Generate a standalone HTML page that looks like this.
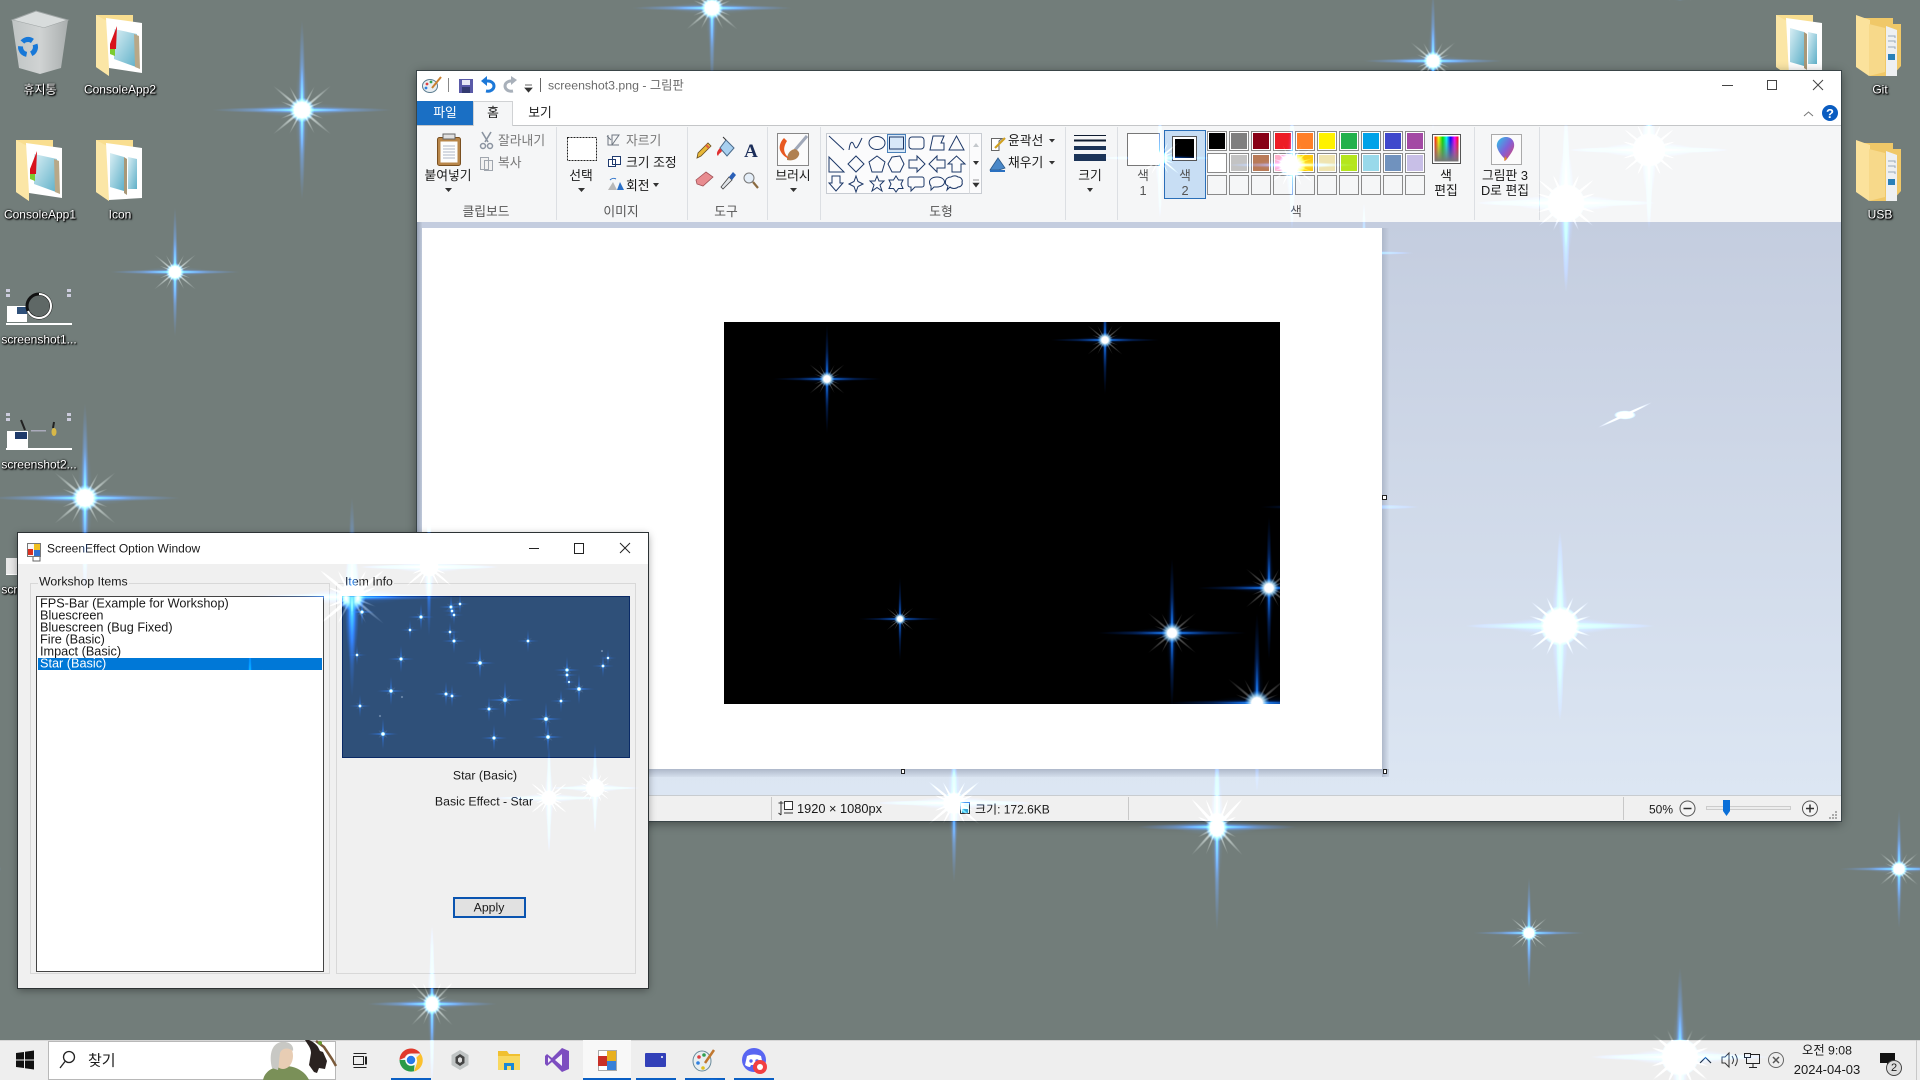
<!DOCTYPE html>
<html lang="ko"><head><meta charset="utf-8"><title>ScreenEffect</title>
<style>
html,body{margin:0;padding:0;width:1920px;height:1080px;overflow:hidden;background:#727d7a}
#r{position:relative;width:1920px;height:1080px;overflow:hidden;background:#727d7a;font-family:"Liberation Sans","Noto Sans CJK KR",sans-serif;font-size:12.8px;color:#1a1a1a;isolation:isolate}
#r div,#r svg.a{position:absolute}
.c,.l{position:absolute;white-space:nowrap;line-height:1;font-style:normal;top:0}
.c{transform:translate(-50%,-45%)}
.l{transform:translateY(-45%)}
.d{color:#fff;font-size:12px;text-shadow:1px 1px 1px #000,0 0 2px #000,1px 1px 2px #000}
.g{color:#777}
.k{color:#555}
.o{mix-blend-mode:screen;mix-blend-mode:plus-lighter}
</style></head><body><div id="r">

<svg width="0" height="0" style="position:absolute"><defs>
<linearGradient id="pad" x1="0" y1="0" x2="1" y2="1"><stop offset="0" stop-color="#d8eef4"/><stop offset="1" stop-color="#5fb0c8"/></linearGradient>
<linearGradient id="bin" x1="0" y1="0" x2="1" y2="0"><stop offset="0" stop-color="#bfc4c4"/><stop offset=".5" stop-color="#d0d3d3"/><stop offset="1" stop-color="#a9aeae"/></linearGradient>
<linearGradient id="rb" x1="0" y1="0" x2="1" y2="0"><stop offset="0" stop-color="#f00"/><stop offset=".17" stop-color="#ff0"/><stop offset=".34" stop-color="#0d0"/><stop offset=".5" stop-color="#0ff"/><stop offset=".67" stop-color="#00f"/><stop offset=".84" stop-color="#f0f"/><stop offset="1" stop-color="#f00"/></linearGradient>
<linearGradient id="gy" x1="0" y1="0" x2="0" y2="1"><stop offset="0" stop-color="#808080" stop-opacity="0"/><stop offset="1" stop-color="#777"/></linearGradient>
<linearGradient id="dr" x1="0" y1="0" x2="1" y2="1"><stop offset="0" stop-color="#28c8e8"/><stop offset=".5" stop-color="#8060d8"/><stop offset="1" stop-color="#e84060"/></linearGradient>
<radialGradient id="sa"><stop offset="0" stop-color="#80c8ff"/><stop offset=".2" stop-color="#1a80ff" stop-opacity=".85"/><stop offset=".5" stop-color="#0850c8" stop-opacity=".4"/><stop offset="1" stop-color="#0030a0" stop-opacity="0"/></radialGradient>
<radialGradient id="sd"><stop offset="0" stop-color="#fff" stop-opacity=".5"/><stop offset="1" stop-color="#fff" stop-opacity="0"/></radialGradient>
<radialGradient id="sc"><stop offset="0" stop-color="#fff"/><stop offset=".42" stop-color="#fff"/><stop offset=".65" stop-color="#9fdcff" stop-opacity=".7"/><stop offset="1" stop-color="#2a90ff" stop-opacity="0"/></radialGradient>
<g id="s">
<ellipse rx="100" ry="3.6" fill="url(#sa)"/><ellipse rx="4" ry="100" fill="url(#sa)"/>
<ellipse rx="55" ry="8" fill="url(#sa)" opacity=".3"/><ellipse rx="8" ry="55" fill="url(#sa)" opacity=".3"/>
<g fill="url(#sd)"><ellipse rx="42" ry="2" transform="rotate(40)"/><ellipse rx="42" ry="2" transform="rotate(-40)"/><ellipse rx="30" ry="1.600" transform="rotate(62)"/><ellipse rx="30" ry="1.600" transform="rotate(-62)"/><ellipse rx="26" ry="1.600" transform="rotate(22)"/><ellipse rx="26" ry="1.600" transform="rotate(-22)"/></g>
<circle r="14" fill="url(#sc)"/>
</g>
<g id="w">
<ellipse rx="100" ry="4" fill="url(#sa)"/><ellipse rx="4.5" ry="100" fill="url(#sa)"/>
<ellipse rx="60" ry="9" fill="url(#sa)" opacity=".4"/><ellipse rx="9" ry="60" fill="url(#sa)" opacity=".4"/>
<g fill="url(#sd)"><ellipse rx="40" ry="1.800" transform="rotate(40)"/><ellipse rx="40" ry="1.800" transform="rotate(-40)"/><ellipse rx="34" ry="1.800" transform="rotate(65)"/><ellipse rx="34" ry="1.800" transform="rotate(-65)"/><ellipse rx="34" ry="1.800" transform="rotate(18)"/><ellipse rx="34" ry="1.800" transform="rotate(-18)"/></g>
<circle r="21" fill="url(#sc)"/>
</g>
<pattern id="edge" patternUnits="userSpaceOnUse" x="0" y="0" width="1920" height="1080">
<use href="#s" transform="translate(712 8) scale(.8)"/>
<use href="#s" transform="translate(1433 61) scale(.7)"/>
<use href="#s" transform="translate(1899 869) scale(.6)"/>
<use href="#w" transform="translate(1680 1057) scale(.9)"/>
<use href="#s" transform="translate(432 1004) scale(.65 .8)"/>
</pattern>
<g id="fA">
<path d="M0 1H37V10H13V62L0 53Z" fill="#f9de90"/><path d="M0 1L13 8V62L0 53Z" fill="#fbe6a6"/>
<path d="M10 4L46 9V59L13 54Z" fill="#fff"/>
<path d="M18 15L41 20L40 53L18 45Z" fill="url(#pad)"/>
<path d="M14 30L21 12L20 35L14 35Z" fill="#d8121c"/><path d="M14 35H19V42L14 40Z" fill="#7ccc30"/>
<path d="M38 20L43 22L44 55L39 53Z" fill="#b8a888"/>
</g>
<g id="fB">
<path d="M0 1H37V10H13V62L0 53Z" fill="#f9de90"/><path d="M0 1L13 8V62L0 53Z" fill="#fbe6a6"/>
<path d="M10 4L46 9V59L13 61Z" fill="#fff"/>
<path d="M14 14L28 18L28 52L14 48Z" fill="url(#pad)"/><path d="M32 18L41 20L41 50L32 50Z" fill="url(#pad)"/>
<path d="M28 18L31 20V56L28 54Z" fill="#a89878"/>
</g>
<g id="fC">
<path d="M4 4H37V10H45V52L36 62H14Z" fill="#f0c868"/>
<path d="M30 12L41 16V62H30Z" fill="#eef0f2"/>
<path d="M32 40H39V46H32Z" fill="#2a80b8"/><path d="M32 22H39V24M32 27H39V29M32 33H39V35" stroke="#9ab" fill="none"/>
<path d="M0 1L14 6V12H13V62L0 53Z" fill="#fbe29c"/><path d="M13 10L29 14V58L13 62Z" fill="#f7d98a"/>
</g>
</defs></svg>

<!-- desktop icons -->
<svg class="a" style="left:0;top:0" width="1920" height="1080">
<path d="M12 20L36 11L68 20L44 28Z" fill="#d8dcdc" stroke="#9ea4a4"/>
<path d="M12 20L44 28L68 20L61 68L40 74L19 68Z" fill="url(#bin)"/>
<circle cx="28" cy="47" r="7.5" fill="none" stroke="#1778d8" stroke-width="5" stroke-dasharray="11 4.700" transform="rotate(-20 28 47)"/>
<use href="#fA" x="96" y="14"/><use href="#fA" x="16" y="139"/><use href="#fB" x="96" y="139"/>
<use href="#fB" x="1776" y="14"/><use href="#fC" x="1856" y="14"/><use href="#fC" x="1856" y="139"/>
<!-- thumbs -->
<g>
<rect x="6" y="288" width="66" height="37" fill="#727d7a"/><path d="M6 324H72" stroke="#fff" stroke-width="2"/>
<rect x="7" y="306" width="20" height="16" fill="#fff"/><rect x="17" y="307" width="10" height="7" fill="#2f5079"/>
<circle cx="39" cy="306" r="12" fill="#5f6866" stroke="#111" stroke-width="3"/><path d="M39 294a12 12 0 0 1 0 24a12 12 0 0 1-11-7" fill="none" stroke="#fff" stroke-width="2"/>
<path d="M6 289h4v3h-4zM6 294h4v3h-4zM67 289h4v3h-4zM67 294h4v3h-4z" fill="#ccd"/>
<rect x="6" y="412" width="66" height="38" fill="#727d7a"/><path d="M6 449H72" stroke="#fff" stroke-width="2"/>
<rect x="7" y="431" width="21" height="17" fill="#fff"/><rect x="15" y="432" width="12" height="7" fill="#1e3a6a"/>
<path d="M21 420l4 10M54 422l-1 6" stroke="#222" stroke-width="2"/><ellipse cx="54" cy="432" rx="2.5" ry="4" fill="#d8b848"/><rect x="31" y="430" width="15" height="1.5" fill="#aab"/>
<path d="M6 413h4v3h-4zM6 418h4v3h-4zM67 413h4v3h-4zM67 418h4v3h-4z" fill="#ccd"/>
<rect x="6" y="558" width="66" height="17" fill="#e8e8e8"/><path d="M6 574.500H72" stroke="#fff"/>
</g>
</svg>
<i class="c d" style="left:40px;top:89px">휴지통</i>
<i class="c d" style="left:120px;top:89px">ConsoleApp2</i>
<i class="c d" style="left:40px;top:214px">ConsoleApp1</i>
<i class="c d" style="left:120px;top:214px">Icon</i>
<i class="c d" style="left:39px;top:339px">screenshot1...</i>
<i class="c d" style="left:39px;top:464px">screenshot2...</i>
<i class="c d" style="left:39px;top:589px">screenshot3...</i>
<i class="c d" style="left:1880px;top:89px">Git</i>
<i class="c d" style="left:1880px;top:214px">USB</i>

<!-- PAINT WINDOW -->
<div style="left:417px;top:71px;width:1424px;height:750px;background:#fff;box-shadow:0 0 0 1px #3a4548,0 2px 10px rgba(0,0,0,.45)"></div>
<div style="left:417px;top:100px;width:1424px;height:25px;background:#fff;border-bottom:1px solid #c4c6c8"></div>
<div style="left:417px;top:101px;width:56px;height:24px;background:#1a6fc4"></div>
<div style="left:473px;top:101px;width:40px;height:25px;background:#f5f6f7;border:1px solid #d0d2d4;border-bottom:0;box-sizing:border-box"></div>
<div style="left:417px;top:126px;width:1424px;height:96px;background:#f5f6f7"></div>
<div style="left:417px;top:222px;width:1424px;height:573px;background:linear-gradient(#c4cddf,#dce6f3)"></div>
<div style="left:417px;top:222px;width:5px;height:573px;background:linear-gradient(90deg,#9aa5b8,#c0c9da)"></div>
<div style="left:422px;top:769px;width:967px;height:8px;background:linear-gradient(#aeb8ca,rgba(190,200,216,.25))"></div>
<div style="left:1382px;top:228px;width:7px;height:549px;background:linear-gradient(90deg,#aeb8ca,rgba(190,200,216,.1))"></div>
<div style="left:422px;top:228px;width:960px;height:541px;background:#fff"></div>
<div style="left:724px;top:322px;width:556px;height:382px;background:#000"></div>
<div style="left:417px;top:795px;width:1424px;height:26px;background:#f0f0f0;border-top:1px solid #c8ccd0;box-sizing:border-box"></div>

<svg class="a" style="left:0;top:0" width="1920" height="1080">
<!-- handles -->
<g fill="#fff" stroke="#222"><rect x="1382.5" y="495.5" width="4" height="4"/><rect x="901.5" y="769.5" width="3" height="4"/><rect x="1383.5" y="769.5" width="3" height="4"/></g>
<!-- separators -->
<g stroke="#dcdfe3"><path d="M556.5 127V220M687.5 127V220M767.5 127V220M820.5 127V220M1065.5 127V220M1117.5 127V220M1474.5 127V220M1539.5 127V220"/></g>
<g stroke="#c8c8c8"><path d="M771.5 797V820M1128.5 797V820M1623.5 797V820"/></g>
<!-- title bar icons -->
<g>
<g transform="translate(5 0)"><ellipse cx="425" cy="86" rx="7.5" ry="6.5" fill="#e8eef2" stroke="#5b7c90"/><circle cx="422" cy="84" r="1.4" fill="#e04040"/><circle cx="426" cy="82" r="1.4" fill="#30a050"/><circle cx="421" cy="88" r="1.4" fill="#3080e0"/><path d="M427 88L436 77" stroke="#c88030" stroke-width="2"/></g>
<path d="M448.5 78V92" stroke="#888"/>
<rect x="459" y="79" width="14" height="14" fill="#5a5aa8"/><rect x="462" y="80" width="8" height="5" fill="#e8e8f4"/><rect x="462" y="87" width="8" height="6" fill="#333a70"/>
<path d="M486 91c5 1 8-2 8-5s-3-5-6-5h-3" fill="none" stroke="#1c78d8" stroke-width="3"/><path d="M481 81l6-5v10z" fill="#1c78d8"/>
<path d="M513 91c-5 1-8-2-8-5s3-5 6-5h0" fill="none" stroke="#a8b0ba" stroke-width="3"/><path d="M517 80l-6-4v9z" fill="#a8b0ba"/>
<path d="M525 85h7M525 88l3.500 4 3.500-4z" fill="#333" stroke="#333" stroke-width=".8"/>
<path d="M540.500 78V92" stroke="#666"/>
</g>
<!-- window controls -->
<g stroke="#444" fill="none"><path d="M1722 85.500H1733"/><rect x="1767.500" y="80.500" width="9" height="9"/><path d="M1813 80L1823 90M1823 80L1813 90"/><path d="M1804 116l4.500-4 4.500 4" stroke="#777"/></g>
<circle cx="1830" cy="113" r="8" fill="#0a5cc0"/>
<text x="1830" y="118" font-family="Liberation Sans,sans-serif" font-size="13" font-weight="700" fill="#fff" text-anchor="middle">?</text>
<!-- paste -->
<rect x="437.500" y="137.500" width="23" height="28" rx="2" fill="#b8864a" stroke="#7a5020"/><rect x="440.500" y="141.500" width="17" height="21" fill="#fdfdfd"/><path d="M443 146h12M443 149h12M443 152h12M443 155h12M443 158h12" stroke="#b0b8c8"/><rect x="443" y="134" width="12" height="5" fill="#e0e0e0" stroke="#666"/>
<path d="M445 188h7l-3.500 4z" fill="#333"/>
<!-- scissors copy -->
<path d="M482 132l6 10M491 132l-6 10" stroke="#8a93a0" stroke-width="1.600"/><circle cx="483" cy="146" r="2.500" fill="none" stroke="#8a93a0" stroke-width="1.500"/><circle cx="490" cy="146" r="2.500" fill="none" stroke="#8a93a0" stroke-width="1.500"/>
<path d="M480.500 157.500h8v12h-8zM484.500 160.500h8v10h-8z" fill="#f2f2f2" stroke="#a0a6ae"/>
<!-- select -->
<rect x="567.500" y="137.500" width="29" height="23" fill="#fff" stroke="#222" stroke-dasharray="2 1"/>
<path d="M578 188h7l-3.500 4z" fill="#333"/>
<path d="M608 135V145H619M612 145V135H619L612 145" fill="none" stroke="#6e7680"/><path d="M607 136l4 4" stroke="#6e7680"/>
<path d="M608.500 159.500h7v7h-7zM612.500 156.500h8v8h-8z" fill="#fff" stroke="#1f3a6e"/>
<path d="M608 190h9l-4-8z" fill="#b8b8b8"/><path d="M617 190h7l-4-8z" fill="#2a70c8"/><path d="M610 180a5 5 0 0 1 6-1" stroke="#2a70c8" fill="none"/>
<path d="M653 183h6l-3 4z" fill="#333"/>
<!-- tools -->
<path d="M697 158l1-5 10-10 3 3-10 10z" fill="#e8b838" stroke="#6a5020" stroke-width=".8"/><path d="M706 145l3 3" stroke="#e06040" stroke-width="2"/>
<path d="M726 140l8 8-7 8-7-8z" fill="#a8d0f0" stroke="#4a6a8a"/><path d="M720 148c-3 3-4 6-2 8 1-3 3-3 4-5z" fill="#e03030"/><path d="M726 140l-3-3" stroke="#333"/>
<text x="751" y="157" font-family="Liberation Serif,serif" font-size="19" font-weight="700" fill="#1c2e5a" text-anchor="middle">A</text>
<path d="M696 180l10-8 7 5-10 9-6-2z" fill="#e88c90" stroke="#a05055" stroke-width=".8"/>
<path d="M721 187l8-10 3 3-9 9z" fill="#e0e4e8" stroke="#444" stroke-width=".8"/><path d="M729 177l4-5 3 3-4 5z" fill="#2a60b8"/>
<circle cx="749" cy="178" r="5" fill="#e4eef8" stroke="#777"/><path d="M753 182l5 6" stroke="#8a6a40" stroke-width="2.200"/>
<!-- brush -->
<rect x="777.500" y="133.500" width="31" height="32" fill="#fbfbfb" stroke="#888"/>
<path d="M807 136L795 150" stroke="#a0a8b8" stroke-width="3"/><path d="M795 149c-6 1-8 6-8 11 5 1 10 0 12-5 1-2-1-5-4-6z" fill="#b08050"/><path d="M784 138c-4 4-5 9-4 12 2 5 6 8 10 9-6-5-8-10-3-18z" fill="#e85820"/>
<path d="M790 188h7l-3.500 4z" fill="#333"/>
<!-- shapes -->
<rect x="826.500" y="133.500" width="155" height="60" fill="#fbfbfc" stroke="#c8ccd2"/>
<path d="M969.500 133.500V193.500" stroke="#d8dadd"/>
<path d="M973 147l3-4 3 4z" fill="#c4c8cc"/><path d="M973 161h6l-3 4z" fill="#333"/><path d="M973 180h6M973 183h6l-3 4z" fill="#333" stroke="#333" stroke-width=".6"/>
<rect x="887.500" y="134.500" width="18" height="18" fill="#d8e8f8" stroke="#4a80b8"/>
<g fill="none" stroke="#1d3868" stroke-width="1">
<path d="M829 136L844 150"/>
<path d="M849 150c1-8 3-10 5-5s3 4 8-7"/>
<ellipse cx="877" cy="143" rx="8" ry="6.500"/>
<rect x="889.500" y="137" width="14" height="12"/>
<rect x="909" y="137" width="15" height="12" rx="3"/>
<path d="M930 150L933 136H944L941 143H944V150Z"/>
<path d="M949 150L956.500 136L964 150Z"/>
<path d="M829 157V172H844Z"/>
<path d="M856 156L864 164L856 172L848 164Z"/>
<path d="M877 156L885 162L882 172H872L869 162Z"/>
<path d="M892 157L900 156L904 164L900 172L892 172L888 164Z"/>
<path d="M909 160H917V156L925 164L917 172V168H909Z"/>
<path d="M945 160H937V156L929 164L937 172V168H945Z"/>
<path d="M952 172V164H948L956.500 156L965 164H961V172Z"/>
<path d="M832 176V183H829L836 191L843 183H840V176Z"/>
<path d="M856 176L858 181.500L863 184L858 186.500L856 192L854 186.500L849 184L854 181.500Z"/>
<path d="M877 176L879 181L884 181L880 185L882 191L877 187.500L872 191L874 185L870 181L875 181Z"/>
<path d="M896 176L898.500 180H903L901 184L903 188.500H898.500L896 192L893.500 188.500H889L891 184L889 180H893.500Z"/>
<path d="M910 177H922a2 2 0 0 1 2 2V185a2 2 0 0 1-2 2H915L911 191V187H910a2 2 0 0 1-2-2V179a2 2 0 0 1 2-2Z"/>
<path d="M937 177c4.500 0 7.500 2.300 7.500 5s-3 5-7.500 5l-3 0-3 3 0-4c-1-1-1.500-2.300-1.500-4 0-2.700 3-5 7.500-5Z"/>
<path d="M951 177c3-2 6-1 7 0 3 0 5 3 4 5 1 2.500-1 5-4 5-2 2-6 2-8 0l-3 3 1-4c-2-1-3-2.500-2.500-4.500 0-3 3-4.500 5.500-4.500Z"/>
</g>
<!-- outline / fill -->
<path d="M991.500 138.500H1002L999 141V150.500H991.500Z" fill="#fff" stroke="#666"/><path d="M995 148l10-10" stroke="#d0a020" stroke-width="2.200"/>
<path d="M990 170l8-12 7 10-6 2z" fill="#4a88c8" stroke="#2a5888" stroke-width=".8"/><path d="M990 171H1005" stroke="#2a70c0" stroke-width="2"/>
<path d="M1049 139h6l-3 3.500zM1049 161h6l-3 3.500z" fill="#333"/>
<!-- size -->
<path d="M1074 135.500H1106" stroke="#0f1c30"/><path d="M1074 140.500H1106" stroke="#0f1c30" stroke-width="2"/><path d="M1074 148H1106" stroke="#1c3458" stroke-width="4"/><path d="M1074 157.500H1106" stroke="#1c3458" stroke-width="7"/>
<path d="M1087 188h6l-3 4z" fill="#333"/>
<!-- color1 2 -->
<rect x="1127.500" y="133.500" width="32" height="32" fill="#fff" stroke="#777"/>
<rect x="1164.500" y="130.500" width="41" height="68" fill="#c8def4" stroke="#2a6fb8"/>
<rect x="1172.500" y="136.500" width="24" height="24" fill="#fff" stroke="#555"/><rect x="1175" y="139" width="19" height="19" fill="#000"/>
<!-- palette -->
<g stroke="#8a8a8a" fill="#fff">
<rect x="1207.500" y="131.500" width="19" height="19"/><rect x="1229.500" y="131.500" width="19" height="19"/><rect x="1251.500" y="131.500" width="19" height="19"/><rect x="1273.500" y="131.500" width="19" height="19"/><rect x="1295.500" y="131.500" width="19" height="19"/><rect x="1317.500" y="131.500" width="19" height="19"/><rect x="1339.500" y="131.500" width="19" height="19"/><rect x="1361.500" y="131.500" width="19" height="19"/><rect x="1383.500" y="131.500" width="19" height="19"/><rect x="1405.500" y="131.500" width="19" height="19"/>
<rect x="1207.500" y="153.500" width="19" height="19"/><rect x="1229.500" y="153.500" width="19" height="19"/><rect x="1251.500" y="153.500" width="19" height="19"/><rect x="1273.500" y="153.500" width="19" height="19"/><rect x="1295.500" y="153.500" width="19" height="19"/><rect x="1317.500" y="153.500" width="19" height="19"/><rect x="1339.500" y="153.500" width="19" height="19"/><rect x="1361.500" y="153.500" width="19" height="19"/><rect x="1383.500" y="153.500" width="19" height="19"/><rect x="1405.500" y="153.500" width="19" height="19"/>
</g>
<g fill="#f5f6f7" stroke="#8a8a8a">
<rect x="1207.500" y="175.500" width="19" height="19"/><rect x="1229.500" y="175.500" width="19" height="19"/><rect x="1251.500" y="175.500" width="19" height="19"/><rect x="1273.500" y="175.500" width="19" height="19"/><rect x="1295.500" y="175.500" width="19" height="19"/><rect x="1317.500" y="175.500" width="19" height="19"/><rect x="1339.500" y="175.500" width="19" height="19"/><rect x="1361.500" y="175.500" width="19" height="19"/><rect x="1383.500" y="175.500" width="19" height="19"/><rect x="1405.500" y="175.500" width="19" height="19"/>
</g>
<rect x="1209" y="133" width="16" height="16" fill="#000"/><rect x="1231" y="133" width="16" height="16" fill="#7f7f7f"/><rect x="1253" y="133" width="16" height="16" fill="#880015"/><rect x="1275" y="133" width="16" height="16" fill="#ed1c24"/><rect x="1297" y="133" width="16" height="16" fill="#ff7f27"/><rect x="1319" y="133" width="16" height="16" fill="#fff200"/><rect x="1341" y="133" width="16" height="16" fill="#22b14c"/><rect x="1363" y="133" width="16" height="16" fill="#00a2e8"/><rect x="1385" y="133" width="16" height="16" fill="#3f48cc"/><rect x="1407" y="133" width="16" height="16" fill="#a349a4"/>
<rect x="1209" y="155" width="16" height="16" fill="#fff"/><rect x="1231" y="155" width="16" height="16" fill="#c3c3c3"/><rect x="1253" y="155" width="16" height="16" fill="#b97a57"/><rect x="1275" y="155" width="16" height="16" fill="#ffaec9"/><rect x="1297" y="155" width="16" height="16" fill="#ffc90e"/><rect x="1319" y="155" width="16" height="16" fill="#efe4b0"/><rect x="1341" y="155" width="16" height="16" fill="#b5e61d"/><rect x="1363" y="155" width="16" height="16" fill="#99d9ea"/><rect x="1385" y="155" width="16" height="16" fill="#7092be"/><rect x="1407" y="155" width="16" height="16" fill="#c8bfe7"/>
<!-- edit colors -->
<rect x="1432.500" y="134.500" width="28" height="29" fill="#fff" stroke="#555"/><rect x="1434.500" y="136.500" width="24" height="25" fill="url(#rb)"/><rect x="1434.500" y="136.500" width="24" height="25" fill="url(#gy)"/>
<!-- 3d -->
<rect x="1491.500" y="134.500" width="30" height="30" fill="#fbfbfb" stroke="#aaa"/>
<path d="M1506 137c6 0 9 5 8 10-1 4-4 8-7 12l-2 2-1-3c-3-3-6-7-7-11-1-5 3-10 9-10z" fill="url(#dr)"/><path d="M1505 156l-1 5 3-2z" fill="#e09020"/>
<!-- status icons -->
<path d="M781 801V815M778.500 803h5M778.500 813l2.500 2" stroke="#333" fill="none"/><rect x="784.500" y="801.500" width="8" height="8" fill="#fff" stroke="#333"/><path d="M784 813H793" stroke="#333"/>
<rect x="960.500" y="802.500" width="9" height="11" fill="#dff" stroke="#333"/><rect x="962" y="809" width="6" height="4" fill="#38a8d8"/>
<circle cx="1687.500" cy="808.500" r="7.500" fill="#f4f4f4" stroke="#555"/><path d="M1683.500 808.500h8" stroke="#333" stroke-width="1.500"/>
<rect x="1706.500" y="806.500" width="84" height="3" fill="#ececec" stroke="#ccc"/>
<path d="M1723 800h7v11l-3.500 5-3.500-5z" fill="#0a6fd8"/>
<circle cx="1810" cy="808.500" r="7.500" fill="#f4f4f4" stroke="#555"/><path d="M1806 808.500h8M1810 804.500v8" stroke="#333" stroke-width="1.500"/>
<path d="M1835 817h2v2h-2zM1832 817h2v2h-2zM1835 814h2v2h-2zM1829 817h2v2h-2zM1832 814h2v2h-2zM1835 811h2v2h-2z" fill="#aaa"/>
</svg>
<i class="l" style="left:548px;top:85px;color:#6b6b6b;font-size:12.300px">screenshot3.png - 그림판</i>
<i class="c" style="left:445px;top:113px;color:#fff">파일</i><i class="c" style="left:493px;top:113px">홈</i><i class="c" style="left:540px;top:113px">보기</i>
<i class="c" style="left:448px;top:176px">붙여넣기</i>
<i class="l g" style="left:498px;top:141px">잘라내기</i><i class="l g" style="left:498px;top:163px">복사</i>
<i class="c" style="left:581px;top:176px">선택</i>
<i class="l g" style="left:626px;top:141px">자르기</i><i class="l" style="left:626px;top:163px">크기 조정</i><i class="l" style="left:626px;top:186px">회전</i>
<i class="c" style="left:793px;top:176px">브러시</i>
<i class="l" style="left:1008px;top:141px">윤곽선</i><i class="l" style="left:1008px;top:163px">채우기</i>
<i class="c" style="left:1090px;top:176px">크기</i>
<i class="c k" style="left:1143px;top:176px">색</i><i class="c k" style="left:1143px;top:191px">1</i>
<i class="c k" style="left:1185px;top:176px">색</i><i class="c k" style="left:1185px;top:191px">2</i>
<i class="c" style="left:1446px;top:176px">색</i><i class="c" style="left:1446px;top:191px">편집</i>
<i class="c" style="left:1505px;top:176px">그림판 3</i><i class="c" style="left:1505px;top:191px">D로 편집</i>
<i class="c k" style="left:486px;top:212px">클립보드</i><i class="c k" style="left:621px;top:212px">이미지</i><i class="c k" style="left:726px;top:212px">도구</i><i class="c k" style="left:941px;top:212px">도형</i><i class="c k" style="left:1296px;top:212px">색</i>
<i class="l" style="left:797px;top:809px;font-size:12.800px">1920 × 1080px</i>
<i class="l" style="left:975px;top:809px;font-size:12px">크기: 172.6KB</i>
<i class="l" style="left:1649px;top:809px;font-size:12px">50%</i>

<!-- OPTION WINDOW -->
<div style="left:18px;top:533px;width:630px;height:455px;background:#f0f0f0;box-shadow:0 0 0 1px #2c3234,0 2px 8px rgba(0,0,0,.4)"></div>
<div style="left:18px;top:533px;width:630px;height:31px;background:#fff"></div>
<div style="left:30px;top:583px;width:300px;height:391px;box-sizing:border-box;border:1px solid #d8d8d8"></div>
<div style="left:336px;top:583px;width:300px;height:391px;box-sizing:border-box;border:1px solid #d8d8d8"></div>
<div style="left:36px;top:596px;width:288px;height:376px;box-sizing:border-box;background:#fff;border:1px solid #444"></div>
<div style="left:38px;top:658px;width:284px;height:12px;background:#0078d7"></div>
<div style="left:342px;top:596px;width:288px;height:162px;box-sizing:border-box;background:#2f5079;border:1px solid #0a2a66"></div>
<div style="left:453px;top:897px;width:73px;height:21px;box-sizing:border-box;background:#e1e1e1;border:2px solid #0a54b0"></div>
<i class="l" style="left:38px;top:581px;background:#f0f0f0;padding:0 1px;font-size:12.300px">Workshop Items</i>
<i class="l" style="left:344px;top:581px;background:#f0f0f0;padding:0 1px;font-size:12.300px">Item Info</i>
<i class="l" style="left:47px;top:548px;font-size:12px">ScreenEffect Option Window</i>
<i class="l" style="left:40px;top:603px;font-size:12.700px">FPS-Bar (Example for Workshop)</i>
<i class="l" style="left:40px;top:615px;font-size:12.700px">Bluescreen</i>
<i class="l" style="left:40px;top:627px;font-size:12.700px">Bluescreen (Bug Fixed)</i>
<i class="l" style="left:40px;top:639px;font-size:12.700px">Fire (Basic)</i>
<i class="l" style="left:40px;top:651px;font-size:12.700px">Impact (Basic)</i>
<i class="l" style="left:40px;top:663px;font-size:12.700px;color:#fff">Star (Basic)</i>
<i class="c" style="left:485px;top:775px;font-size:12.300px">Star (Basic)</i>
<i class="c" style="left:484px;top:801px;font-size:12.300px">Basic Effect - Star</i>
<i class="c" style="left:489px;top:907px;font-size:12.300px">Apply</i>
<svg class="a" style="left:0;top:0" width="1920" height="1080">
<rect x="33" y="553" width="7" height="8" fill="#fff" stroke="#666"/><rect x="27.500" y="543.500" width="13" height="13" fill="#f8f8f8" stroke="#777"/><rect x="28" y="549" width="5" height="6" fill="#d83020"/><rect x="34" y="544" width="6" height="6" fill="#f0c020"/><rect x="34" y="550" width="6" height="6" fill="#3070d0"/>
<g stroke="#222" fill="none"><path d="M529 548.500H539"/><rect x="574.500" y="543.500" width="9" height="10"/><path d="M620 543L630 553M630 543L620 553"/></g>
</svg>

<!-- TASKBAR -->
<div style="left:0;top:1040px;width:1920px;height:40px;background:#eeeeee;border-top:1px solid #d6d6d6;box-sizing:border-box"></div>
<div style="left:48px;top:1041px;width:288px;height:39px;background:#fff;border:1px solid #b8b8b8;box-sizing:border-box"></div>
<div style="left:583px;top:1040px;width:48px;height:40px;background:#f8f8f8"></div>
<div style="left:391px;top:1078px;width:40px;height:2px;background:#0a5fc4"></div>
<div style="left:583px;top:1078px;width:48px;height:2px;background:#0a5fc4"></div>
<div style="left:636px;top:1078px;width:40px;height:2px;background:#0a5fc4"></div>
<div style="left:685px;top:1078px;width:40px;height:2px;background:#0a5fc4"></div>
<div style="left:734px;top:1078px;width:40px;height:2px;background:#0a5fc4"></div>
<svg class="a" style="left:0;top:0" width="1920" height="1080">
<path d="M16 1053l8-1v7.500h-8zM25 1051.800l9-1.300v9h-9zM16 1060.500h8v7.500l-8-1zM25 1060.500h9v9l-9-1.300z" fill="#111"/>
<circle cx="69" cy="1057" r="5.500" fill="none" stroke="#222" stroke-width="1.300"/><path d="M65 1061.500L60 1068" stroke="#222" stroke-width="1.300"/>
<!-- doodle -->
<path d="M263 1080c2-10 12-14 22-14s20 5 24 14z" fill="#7a9058"/>
<ellipse cx="283" cy="1056" rx="10" ry="13" fill="#e8cdb4"/><path d="M272 1068c-3-12-1-24 9-26 10-1 13 5 12 9-5-4-11-3-13 2-1 6-1 12-2 17z" fill="#c8c8c4"/>
<path d="M305 1040c3 5 6 8 6 13l-2 12 5 7 3 1 2-5 6 1 2-8-4-9-3-1-2-4c-2-3-6-6-9-7z" fill="#2a2220"/>
<path d="M316 1041l8 6 8 12 4 7" stroke="#7a5a3a" stroke-width="2.500" fill="none"/><circle cx="320" cy="1043" r="2" fill="#6a9a30"/>
<!-- task view -->
<path d="M353.500 1053.500h13M353.500 1067.500h13" stroke="#222"/><rect x="353.500" y="1056.500" width="10" height="8" fill="none" stroke="#222"/><rect x="365" y="1056.500" width="2" height="8" fill="#222"/>
<!-- chrome -->
<path d="M411 1060m-11.500 0a11.500 11.500 0 0 1 21-6.500L411 1053.500a6.500 6.500 0 0 0-6 4z" fill="#e0392c"/>
<path d="M420.500 1053.500a11.500 11.500 0 0 1-6.500 18L417 1063a6.500 6.500 0 0 0-1-5z" fill="#fbc02d"/>
<path d="M414 1071.200a11.500 11.500 0 0 1-14.500-11.200l6 0a6.500 6.500 0 0 0 9 5z" fill="#2a9a48"/>
<circle cx="411" cy="1060" r="5" fill="#2a7ae8" stroke="#fff" stroke-width="1.500"/>
<!-- unity -->
<path d="M460 1050l8.500 5v10l-8.500 5-8.500-5v-10z" fill="#c0c4c4"/><path d="M460 1054l4.500 3v6l-4.500 3-4.500-3v-6z" fill="#444"/><path d="M460 1057l2 1.500v3l-2 1.500-2-1.500v-3z" fill="#ddd"/>
<!-- explorer -->
<path d="M498 1051h9l2 3h11v16h-22z" fill="#f0c030"/><rect x="498" y="1056" width="22" height="14" fill="#f8d860"/><path d="M504 1070v-7h10v7h-3v-4h-4v4z" fill="#1a88d8"/>
<!-- vs -->
<path d="M569 1051L562 1048L552 1058L547 1054L545 1056V1064L547 1066L552 1062L562 1072L569 1069Z" fill="#7c4dc0"/><path d="M562 1054V1066L555 1060ZM548 1057L551 1060L548 1063Z" fill="#f4f0fa"/>
<!-- app -->
<rect x="598.500" y="1050.500" width="9" height="20" fill="#fff" stroke="#aaa"/><rect x="607.500" y="1050.500" width="9" height="20" fill="#fff" stroke="#aaa"/><rect x="598" y="1056" width="9" height="10" fill="#c83028"/><rect x="607" y="1051" width="9" height="10" fill="#e8b020"/><rect x="607" y="1061" width="9" height="9" fill="#3880d8"/>
<!-- blue rect -->
<rect x="645" y="1053" width="21" height="14" rx="1" fill="#3240b8"/><path d="M661 1057h2M662 1056v2" stroke="#fff"/>
<!-- paint -->
<ellipse cx="702" cy="1061" rx="9" ry="10" fill="#e8eef0" stroke="#6a8a9a"/><circle cx="699" cy="1057" r="1.800" fill="#e04040"/><circle cx="704" cy="1055" r="1.800" fill="#30a050"/><circle cx="698" cy="1063" r="1.800" fill="#3080e0"/><circle cx="703" cy="1068" r="1.800" fill="#e0c020"/>
<path d="M705 1063L714 1050" stroke="#c07830" stroke-width="2.500"/>
<!-- discord -->
<circle cx="754" cy="1060" r="12" fill="#5865f2"/><path d="M747 1056c4-2 10-2 14 0l2 9c-2 1.500-4 2-5 2l-1-2h-6l-1 2c-1 0-3-.5-5-2z" fill="#fff"/><circle cx="751" cy="1061" r="1.700" fill="#5865f2"/><circle cx="757" cy="1061" r="1.700" fill="#5865f2"/>
<circle cx="760" cy="1067" r="7" fill="#f23f42"/><circle cx="760" cy="1067" r="3" fill="#fff"/>
<!-- tray -->
<path d="M1700 1063l5.500-5.500 5.500 5.500" fill="none" stroke="#1f2c3a" stroke-width="1.200"/>
<path d="M1722 1057h3l4-4v14l-4-4h-3zM1732 1056c2 3 2 5 0 8M1735 1054c3 4 3 8 0 12" fill="none" stroke="#333"/>
<path d="M1746.500 1054.500h13v9h-13zM1753 1064v3M1749 1067.500h8" fill="none" stroke="#222"/><path d="M1744.500 1053.500h6v4h-6z" fill="#eee" stroke="#222"/>
<circle cx="1776" cy="1060" r="7.500" fill="#eee" stroke="#666"/><path d="M1773 1057l6 6M1779 1057l-6 6" stroke="#555" stroke-width="1.500"/>
<path d="M1880 1053h15v10h-5l-3 3v-3h-7z" fill="#111"/><circle cx="1894" cy="1068" r="7.500" fill="#ddd" stroke="#444"/>
<path d="M1916.500 1040V1080" stroke="#c8c8c8"/>
</svg>
<i class="l" style="left:88px;top:1060px;font-size:15px">찾기</i>
<i class="c" style="left:1827px;top:1050px;font-size:12.300px">오전 9:08</i>
<i class="c" style="left:1827px;top:1069px;font-size:13px">2024-04-03</i>
<i class="c" style="left:1894px;top:1068px;font-size:11px">2</i>

<!-- STAR OVERLAY -->
<svg class="a o" style="left:0;top:0" width="1920" height="1080">
<rect x="0" y="0" width="1920" height="1080" fill="url(#edge)"/>
<use href="#s" transform="translate(302 110) scale(.9)"/>
<use href="#s" transform="translate(175 272) scale(.65)"/>
<use href="#s" transform="translate(85 498) scale(.95)"/>
<use href="#s" transform="translate(1160 158) scale(.6)"/>
<use href="#w" transform="translate(1292 165) scale(.65)"/>
<use href="#s" transform="translate(1364 253) scale(.5)"/>
<use href="#s" transform="translate(1340 507) scale(.8)"/>
<use href="#w" transform="translate(1566 203) scale(.9)"/>
<use href="#w" transform="translate(1649 150) scale(.8)"/>
<ellipse cx="1625" cy="415" rx="30" ry="1.500" fill="url(#sd)" transform="rotate(-25 1625 415)"/><ellipse cx="1625" cy="415" rx="11" ry="4.500" fill="url(#sc)" opacity=".75"/>
<use href="#w" transform="translate(1560 626) scale(.95)"/>
<use href="#s" transform="translate(954 803) scale(.8)"/>
<use href="#s" transform="translate(1217 827) scale(.8 1.050)"/>
<use href="#s" transform="translate(1529 933) scale(.56)"/>
<use href="#s" transform="translate(352 597) scale(1)"/>
<ellipse cx="352" cy="605" rx="7" ry="60" fill="url(#sa)"/>
<use href="#s" transform="translate(429 567) scale(.7)"/>
<use href="#s" transform="translate(549 798) scale(.55)"/>
<use href="#w" transform="translate(595 788) scale(.45)"/>
<use href="#s" transform="translate(250 680) scale(.4)"/>
<use href="#s" transform="translate(827 379) scale(.55)"/>
<use href="#s" transform="translate(1105 340) scale(.55)"/>
<use href="#s" transform="translate(900 619) scale(.42)"/>
<use href="#s" transform="translate(1172 633) scale(.75)"/>
<use href="#s" transform="translate(1269 588) scale(.72)"/>
<use href="#s" transform="translate(1257 703) scale(.9)"/>
<!-- preview -->
<use href="#s" transform="translate(362 612) scale(.15)"/><use href="#s" transform="translate(421 617) scale(.15)"/><use href="#s" transform="translate(410 630) scale(.12)"/><use href="#s" transform="translate(451 607) scale(.14)"/><use href="#s" transform="translate(452 611) scale(.12)"/><use href="#s" transform="translate(460 604) scale(.12)"/><use href="#s" transform="translate(454 615) scale(.12)"/><use href="#s" transform="translate(450 632) scale(.12)"/><use href="#s" transform="translate(454 641) scale(.14)"/><use href="#s" transform="translate(528 641) scale(.13)"/><use href="#s" transform="translate(357 655) scale(.12)"/><use href="#s" transform="translate(401 659) scale(.15)"/><use href="#s" transform="translate(480 663) scale(.17)"/><use href="#s" transform="translate(608 658) scale(.11)"/><use href="#s" transform="translate(603 666) scale(.13)"/><use href="#s" transform="translate(602 651) scale(.05)"/><use href="#s" transform="translate(567 670) scale(.15)"/><use href="#s" transform="translate(567 675) scale(.13)"/><use href="#s" transform="translate(569 682) scale(.1)"/><use href="#s" transform="translate(579 689) scale(.17)"/><use href="#s" transform="translate(561 701) scale(.13)"/><use href="#s" transform="translate(391 691) scale(.16)"/><use href="#s" transform="translate(446 694) scale(.14)"/><use href="#s" transform="translate(452 696) scale(.13)"/><use href="#s" transform="translate(505 700) scale(.2)"/><use href="#s" transform="translate(489 709) scale(.14)"/><use href="#s" transform="translate(360 706) scale(.13)"/><use href="#s" transform="translate(402 697) scale(.05)"/><use href="#s" transform="translate(380 716) scale(.05)"/><use href="#s" transform="translate(383 734) scale(.17)"/><use href="#s" transform="translate(494 738) scale(.15)"/><use href="#s" transform="translate(546 719) scale(.18)"/><use href="#s" transform="translate(548 737) scale(.17)"/>
</svg>
</div></body></html>
